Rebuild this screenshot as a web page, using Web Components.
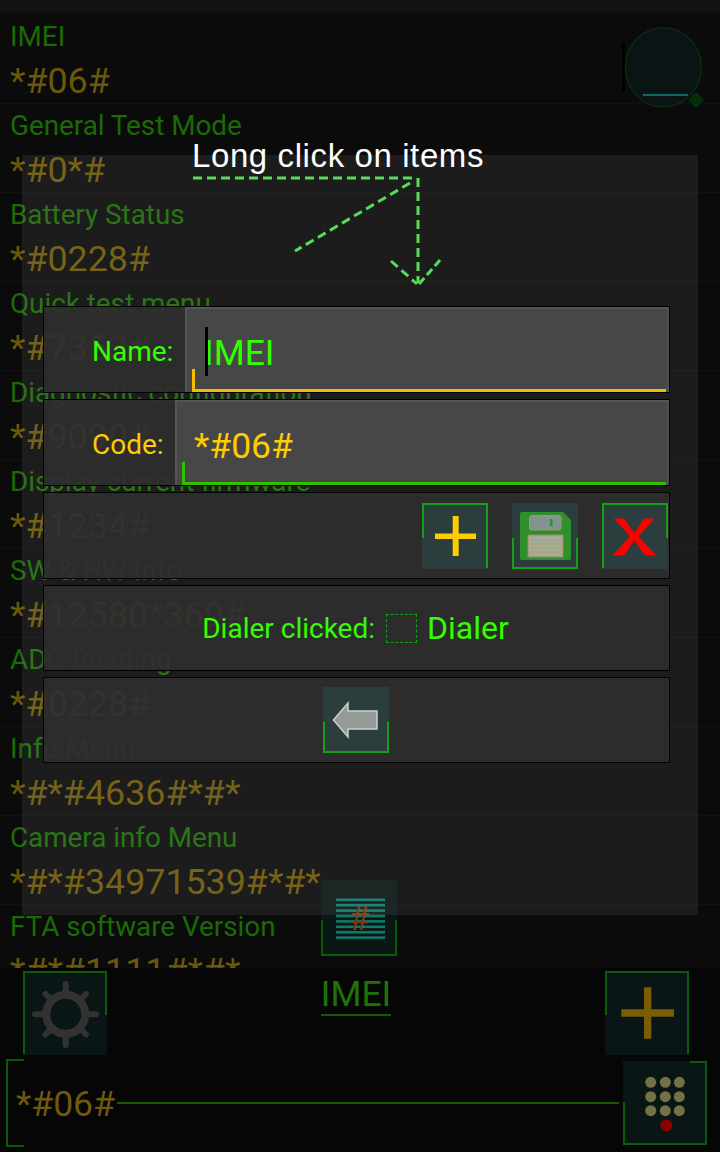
<!DOCTYPE html>
<html>
<head>
<meta charset="utf-8">
<title>Codes</title>
<style>
html, body { margin: 0; padding: 0; background: #0b0b0b; }
body { font-family: Roboto, "Liberation Sans", sans-serif; }
</style>
</head>
<body>
<phone-screen>
    <code-list slot="list">
        <code-row><span slot="name">IMEI</span>*#06#</code-row>
        <code-row><span slot="name">General Test Mode</span>*#0*#</code-row>
        <code-row><span slot="name">Battery Status</span>*#0228#</code-row>
        <code-row><span slot="name">Quick test menu</span>*#7353#</code-row>
        <code-row><span slot="name">Diagnostic configuration</span>*#9090#</code-row>
        <code-row><span slot="name">Display current firmware</span>*#1234#</code-row>
        <code-row><span slot="name">SW &amp; HW Info</span>*#12580*369#</code-row>
        <code-row><span slot="name">ADC Reading</span>*#0228#</code-row>
        <code-row><span slot="name">Info Menu</span>*#*#4636#*#*</code-row>
        <code-row><span slot="name">Camera info Menu</span>*#*#34971539#*#*</code-row>
        <code-row><span slot="name">FTA software Version</span>*#*#1111#*#*</code-row>
    </code-list>
    <bottom-bar slot="bar"></bottom-bar>
    <edit-dialog slot="dialog"></edit-dialog>
</phone-screen>

<script>
class PhoneScreen extends HTMLElement {
    constructor() {
        super()
        this.root = this.attachShadow({ mode: 'open' })
    }

    connectedCallback() {
        this.root.innerHTML = `<style>
      :host {
        display: flex;
        flex-direction: column;
        position: relative;
        width: 720px;
        height: 1152px;
        overflow: hidden;
        background: #0b0b0b;
      }
      .status { height: 13px; flex: none; background: #111; }
      .list { flex: 1; min-height: 0; overflow: hidden; }
      .bar { flex: none; }
      .search { position: absolute; left: 618px; top: 22px; }
      .sheet { position: absolute; left: 321px; top: 880px; }
    </style>
    <div class="status"></div>
    <div class="list"><slot name="list"></slot></div>
    <div class="bar"><slot name="bar"></slot></div>
    <svg class="search" width="90" height="90" viewBox="0 0 90 90">
        <rect x="4" y="20" width="3" height="49" fill="#000"/>
        <ellipse cx="45.3" cy="45.3" rx="38" ry="39.5" fill="#0a1414" stroke="#0b2a0e" stroke-width="1.5"/>
        <rect x="25" y="72" width="45" height="2" fill="#0d6a66"/>
        <path d="M78 70l8 8-8 8-8-8z" fill="#032e08"/>
    </svg>
    <frame-btn class="sheet" size="76" kind="bottom" tint="#0b1715" stroke="#0a5c0a">
        <svg width="76" height="76" viewBox="0 0 76 76">
            <g fill="#0e7a6c">
                <rect x="15" y="18.5" width="49" height="2.6"/>
                <rect x="15" y="23.9" width="49" height="2.6"/>
                <rect x="15" y="29.3" width="49" height="2.6"/>
                <rect x="15" y="34.7" width="49" height="2.6"/>
                <rect x="15" y="40.1" width="49" height="2.6"/>
                <rect x="15" y="45.5" width="49" height="2.6"/>
                <rect x="15" y="50.9" width="49" height="2.6"/>
                <rect x="15" y="56.3" width="49" height="2.6"/>
            </g>
            <text x="38" y="50" text-anchor="middle" font-family="Roboto, sans-serif" font-size="34" fill="#7a3a10">#</text>
        </svg>
    </frame-btn>
    <slot name="dialog"></slot>`
    }
}

class CodeList extends HTMLElement {
    constructor() {
        super()
        this.attachShadow({ mode: 'open' }).innerHTML = `<style>
      :host { display: block; height: 100%; padding-top: 2px; box-sizing: border-box; }
    </style><slot></slot>`
    }
}

class CodeRow extends HTMLElement {
    constructor() {
        super()
        this.attachShadow({ mode: 'open' }).innerHTML = `<style>
      :host {
        display: flex;
        flex-direction: column;
        height: 89px;
        box-sizing: border-box;
        padding: 1px 0 0 10px;
        border-bottom: 1px solid #121212;
        white-space: nowrap;
      }
      .name { color: #1c6a06; font-size: 27.8px; line-height: 42px; height: 42px; }
      .code { color: #6b5808; font-size: 35.8px; line-height: 46px; }
    </style>
    <div class="name"><slot name="name"></slot></div>
    <div class="code"><slot></slot></div>`
    }
}

class FrameBtn extends HTMLElement {
    constructor() {
        super()
        this.root = this.attachShadow({ mode: 'open' })
    }

    connectedCallback() {
        const s = parseInt(this.getAttribute('size'), 10)
        const tint = this.getAttribute('tint') || '#2b3d3d'
        const stroke = this.getAttribute('stroke') || '#14a014'
        this.root.innerHTML = `<style>
      :host {
        display: block;
        position: relative;
        width: ${s}px;
        height: ${s}px;
        background: ${tint};
        flex: none;
      }
      svg { position: absolute; left: 0; top: 0; }
      ::slotted(svg) { display: block; }
    </style>
    <slot></slot>
    ${this.buildFrame(s, this.getAttribute('kind'), stroke)}`
    }

    /**
     * Builds the partial outline round a button
     * @param {number} s button size
     * @param {string} kind which edges are drawn
     * @param {string} stroke outline colour
     * @return {string}
     */
    buildFrame(s, kind, stroke) {
        const a = 1
        const b = s - 1
        const m = s / 2 + 2
        const paths = {
            'top-left': `M${a} ${b}V${a}H${b}V${m}`,
            'top-right': `M${a} ${m}V${a}H${b}V${b}`,
            'bottom': `M${a} ${m}V${b}H${b}V${m}`,
            'dial': `M${s - 17} ${a}H${b}V${b}H${a}V${m - 3}`
        }
        return `<svg width="${s}" height="${s}" viewBox="0 0 ${s} ${s}" fill="none">
        <path d="${paths[kind]}" stroke="${stroke}" stroke-width="2"/></svg>`
    }
}

class BottomBar extends HTMLElement {
    constructor() {
        super()
        this.root = this.attachShadow({ mode: 'open' })
    }

    connectedCallback() {
        this.root.innerHTML = `<style>
      :host {
        display: flex;
        flex-direction: column;
        height: 184px;
        box-sizing: border-box;
        background: #060606;
        padding-top: 3px;
      }
      .top { display: flex; align-items: flex-start; padding: 0 31px 0 23px; height: 84px; }
      .title {
        flex: 1;
        text-align: center;
        padding-top: 3px;
      }
      .title span {
        display: inline-block;
        color: #1c7406;
        font-size: 35.5px;
        line-height: 40px;
        border-bottom: 2px solid #155a05;
      }
      .dial { display: flex; align-items: center; height: 89px; margin-top: 3px; padding: 0 13px 0 6px; }
      .bracket {
        width: 18px;
        height: 88px;
        flex: none;
        box-sizing: border-box;
        border: 2px solid #0a5c0a;
        border-right: 0;
      }
      .number { color: #6f5810; font-size: 35.5px; line-height: 46px; margin: 2px 0 0 -8px; }
      .line { flex: 1; height: 2px; background: #155a05; margin: 0 4px 0 2px; }
    </style>
    <div class="top">
        <frame-btn size="84" kind="top-left" tint="#0a1616" stroke="#0a5c0a">
            <svg width="84" height="84" viewBox="0 0 84 84">
                <g stroke="#323232" fill="none">
                    <circle cx="42.7" cy="43.3" r="19.5" stroke-width="8"/>
                    <g stroke-width="6" stroke-linecap="round">
                        <path d="M42.7 20V13M42.7 67V74M19 43.3H12M66 43.3H73"/>
                        <path d="M27 27.5L22.5 23M58.5 27.5L63 23M27 59L22.5 63.5M58.5 59L63 63.5"/>
                    </g>
                </g>
            </svg>
        </frame-btn>
        <div class="title"><span>IMEI</span></div>
        <frame-btn size="84" kind="top-right" tint="#0a1616" stroke="#0a5c0a">
            <svg width="84" height="84" viewBox="0 0 84 84">
                <path d="M39 16.3h7.3v51.4H39zM16.3 38.3H69v7.4H16.3z" fill="#7c5c06"/>
            </svg>
        </frame-btn>
    </div>
    <div class="dial">
        <div class="bracket"></div>
        <span class="number">*#06#</span>
        <div class="line"></div>
        <frame-btn size="84" kind="dial" tint="#0a1616" stroke="#0a5c0a">
            <svg width="84" height="84" viewBox="0 0 84 84">
                <g fill="#727248">
                    <circle cx="27.7" cy="21.3" r="5.5"/><circle cx="42.3" cy="21.3" r="5.5"/><circle cx="56.3" cy="21.3" r="5.5"/>
                    <circle cx="27.7" cy="35.7" r="5.5"/><circle cx="42.3" cy="35.7" r="5.5"/><circle cx="56.3" cy="35.7" r="5.5"/>
                    <circle cx="27.7" cy="49.7" r="5.5"/><circle cx="42.3" cy="49.7" r="5.5"/><circle cx="56.3" cy="49.7" r="5.5"/>
                </g>
                <circle cx="43.3" cy="64.3" r="6" fill="#8a0000"/>
            </svg>
        </frame-btn>
    </div>`
    }
}

class FormField extends HTMLElement {
    constructor() {
        super()
        this.root = this.attachShadow({ mode: 'open' })
    }

    connectedCallback() {
        const color = this.getAttribute('color')
        const line = this.getAttribute('line')
        const labelWidth = this.getAttribute('label-width')
        const caret = this.hasAttribute('caret')
        this.root.innerHTML = `<style>
      :host {
        display: flex;
        height: 87px;
        box-sizing: border-box;
        background: rgba(46, 46, 46, 0.92);
        border: 1px solid #000;
      }
      .label {
        width: ${labelWidth}px;
        flex: none;
        box-sizing: border-box;
        padding: 28px 0 0 48px;
        color: ${color};
        font-size: 28px;
        line-height: 34px;
      }
      .input {
        flex: 1;
        position: relative;
        background: #474747;
        border: 2px solid #555;
        border-right-color: #505050;
        border-bottom: 0;
        color: ${color};
        font-size: 35.5px;
        line-height: 46px;
        padding: 21px 0 0 17px;
      }
      .caret { position: absolute; left: 18px; top: 18px; width: 3px; height: 49px; background: #000; }
      .mark {
        position: absolute;
        left: 5px;
        right: 1px;
        bottom: 0;
        height: 23px;
        box-sizing: border-box;
        border-left: 3px solid ${line};
        border-bottom: 3px solid ${line};
      }
    </style>
    <div class="label"><slot name="label"></slot></div>
    <div class="input">
        ${caret ? '<div class="caret"></div>' : ''}
        <slot></slot>
        <div class="mark"></div>
    </div>`
    }
}

class DialogRow extends HTMLElement {
    constructor() {
        super()
        this.attachShadow({ mode: 'open' }).innerHTML = `<style>
      :host {
        display: flex;
        align-items: center;
        height: 87px;
        box-sizing: border-box;
        background: rgba(46, 46, 46, 0.92);
        border: 1px solid #000;
      }
    </style><slot></slot>`
    }
}

class EditDialog extends HTMLElement {
    constructor() {
        super()
        this.root = this.attachShadow({ mode: 'open' })
    }

    connectedCallback() {
        this.root.innerHTML = `<style>
      :host {
        display: block;
        position: absolute;
        left: 0;
        top: 0;
        width: 720px;
        height: 1152px;
      }
      .panel {
        position: absolute;
        left: 22px;
        top: 155px;
        width: 676px;
        height: 760px;
        background: rgba(255, 255, 255, 0.07);
      }
      .body { position: relative; padding-top: 136px; }
      .hint {
        margin-left: 192px;
        color: #fff;
        font: 33px/40px "Liberation Sans", sans-serif;
        letter-spacing: 0.6px;
        white-space: nowrap;
      }
      .arrows { display: block; }
      .rows { display: flex; flex-direction: column; gap: 6px; margin: 0 50px 0 43px; }
      .buttons { justify-content: flex-end; gap: 24px; padding-right: 1px; }
      .dialer { justify-content: center; color: #33ff00; padding-right: 2px; }
      .dialer-label { font-size: 28px; margin-right: 11px; }
      .check { width: 31px; height: 29px; box-sizing: border-box; border: 1px dashed #14a014; margin-right: 10px; }
      .dialer-name { font-size: 32px; }
      .back { justify-content: flex-start; padding-left: 279px; }
      .five { height: 86px; }
    </style>
    <div class="panel"></div>
    <div class="body">
        <div class="hint">Long click on items</div>
        <svg class="arrows" width="720" height="130" viewBox="0 176 720 130" fill="none" stroke="#55dd55" stroke-width="3" stroke-dasharray="9 5">
            <path d="M193 178H413"/>
            <path d="M418 178V283"/>
            <path d="M410 183L295 251"/>
            <path d="M391 261L417 284"/>
            <path d="M419 284L440 260" stroke-dasharray="8 4"/>
        </svg>
        <div class="rows">
            <form-field color="#33ff00" line="#f5bd00" label-width="141" caret>
                <span slot="label">Name:</span>IMEI
            </form-field>
            <form-field color="#ffcc00" line="#2fc000" label-width="131">
                <span slot="label">Code:</span>*#06#
            </form-field>
            <dialog-row class="buttons">
                <frame-btn size="66" kind="top-right">
                    <svg width="66" height="66" viewBox="0 0 66 66">
                        <path d="M30.7 13h6v40h-6zM13 30.5h41V36H13z" fill="#ffcc00"/>
                    </svg>
                </frame-btn>
                <frame-btn size="66" kind="bottom">
                    <svg width="66" height="66" viewBox="0 0 66 66">
                        <path d="M10 9h41l8 8v38a2 2 0 0 1-2 2H10a2 2 0 0 1-2-2V11a2 2 0 0 1 2-2z" fill="#2f8f2a"/>
                        <rect x="17.5" y="12.5" width="31.5" height="14.5" rx="2" fill="#84938f" stroke="#9a9a70"/>
                        <rect x="38" y="16" width="2.5" height="7" fill="#1f9a2a"/>
                        <rect x="16" y="32" width="35" height="22" fill="#a5aba1" stroke="#a08a50"/>
                        <path d="M18 37h31M18 41h31M18 45h31M18 49h31" stroke="#a8a860" stroke-width="1.2"/>
                    </svg>
                </frame-btn>
                <frame-btn size="66" kind="top-left">
                    <svg width="66" height="66" viewBox="0 0 66 66">
                        <path d="M12 15.5H22L32.2 30 42 15.5H52.5L36.5 33.5 54.5 52.5H43L32.2 37.5 22 52.5H10.5L28 33.5z" fill="#ff0000"/>
                    </svg>
                </frame-btn>
            </dialog-row>
            <dialog-row class="dialer five">
                <span class="dialer-label">Dialer clicked:</span>
                <div class="check"></div>
                <span class="dialer-name">Dialer</span>
            </dialog-row>
            <dialog-row class="back five">
                <frame-btn size="66" kind="bottom">
                    <svg width="66" height="66" viewBox="0 0 66 66">
                        <path d="M10.5 33L25 16v8h29v18H25v8z" fill="#939b98" stroke="#c9cfcc" stroke-width="1.5"/>
                    </svg>
                </frame-btn>
            </dialog-row>
        </div>
    </div>`
    }
}

customElements.define('phone-screen', PhoneScreen)
customElements.define('code-list', CodeList)
customElements.define('code-row', CodeRow)
customElements.define('frame-btn', FrameBtn)
customElements.define('bottom-bar', BottomBar)
customElements.define('form-field', FormField)
customElements.define('dialog-row', DialogRow)
customElements.define('edit-dialog', EditDialog)
</script>
</body>
</html>
